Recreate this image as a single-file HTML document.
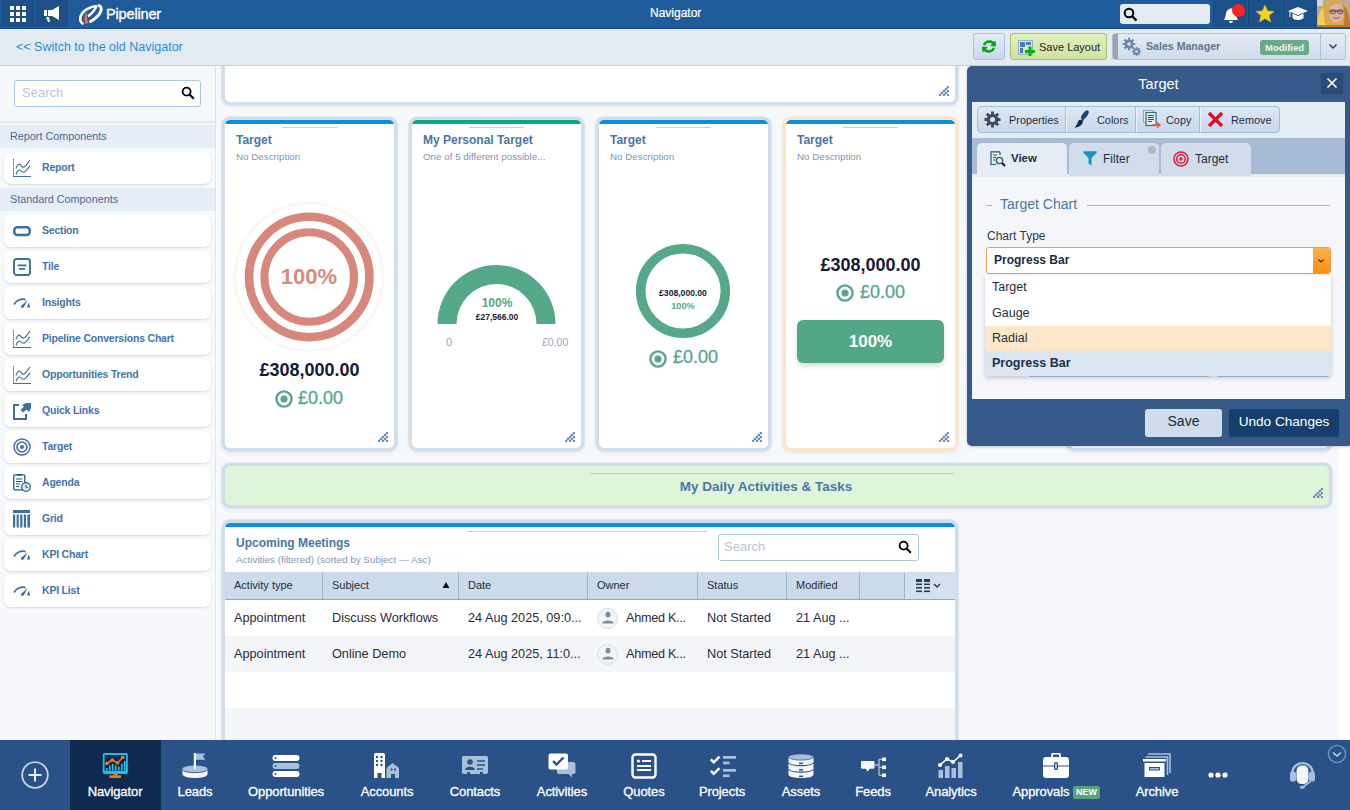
<!DOCTYPE html>
<html><head><meta charset="utf-8">
<style>
*{box-sizing:border-box;margin:0;padding:0}
html,body{width:1350px;height:810px;overflow:hidden}
body{font-family:"Liberation Sans",sans-serif;background:#f6f8fc;position:relative;color:#1b2a3a}
.abs{position:absolute}
svg{display:block}
/* top bar */
#top{z-index:30;position:absolute;left:0;top:0;width:1350px;height:29px;background:#1f5b9b;border-bottom:1px solid #1a4a82}
#top .sq{position:absolute;top:0;height:27px;background:#1d4f88}
#sub{z-index:30;position:absolute;left:0;top:29px;width:1350px;height:37px;background:#e4eaf2;border-bottom:1px solid #c4cfdc}
#side{position:absolute;left:0;top:66px;width:216px;height:674px;background:#f6f8fc;border-right:1px solid #dfe5ee}
#main{position:absolute;left:217px;top:66px;width:1121px;height:674px;background:#f6f8fc}
#rstrip{position:absolute;left:1338px;top:66px;width:12px;height:674px;background:#fff}
#bottom{z-index:30;position:absolute;left:0;top:740px;width:1350px;height:70px;background:#2a5289}
</style></head><body>
<!-- TOP BAR -->
<div id="top">
  <div class="sq" style="left:1px;width:33px;border-right:1px solid #1b4677"></div>
  <div class="sq" style="left:35px;width:33px"></div>
  <svg class="abs" style="left:10px;top:6px" width="16" height="16" viewBox="0 0 16 16" fill="#fff"><rect x="0" y="0" width="4" height="4"/><rect x="6" y="0" width="4" height="4"/><rect x="12" y="0" width="4" height="4"/><rect x="0" y="6" width="4" height="4"/><rect x="6" y="6" width="4" height="4"/><rect x="12" y="6" width="4" height="4"/><rect x="0" y="12" width="4" height="4"/><rect x="6" y="12" width="4" height="4"/><rect x="12" y="12" width="4" height="4"/></svg>
  <svg class="abs" style="left:43px;top:5px" width="18" height="18" viewBox="0 0 18 18" fill="#fff"><rect x="1" y="5" width="3" height="6"/><path d="M5 5 L9 5 L16 1 L16 15 L9 11 L5 11 Z"/><path d="M3 12 L6 12 L7 17 L5 17 Z"/></svg>
  <svg class="abs" style="left:76px;top:2px" width="30" height="25" viewBox="0 0 30 25"><g fill="none" stroke="#fff" stroke-linecap="round"><path d="M6.5 21.5 C2 18 4.5 10.5 11.5 6.8 C14.5 5.2 17.5 4.3 20 4.3" stroke-width="2.6"/><path d="M12.8 13.8 C15.5 11.5 19 8 20.3 4.6" stroke-width="2.5"/><path d="M23 3.6 C27.5 5.5 25.5 13 14.5 19.5" stroke-width="3"/></g><path d="M10.3 9.3 C8.3 13 8 18 9.3 22 L12.3 21.2 C11 17.5 10.6 13.5 10.3 9.3 Z" fill="#f26a3f"/></svg>
  <div class="abs" style="left:106px;top:6px;font-size:14.6px;color:#fff;letter-spacing:-0.2px;-webkit-text-stroke:0.35px #fff">Pipeliner</div>
  <div class="abs" style="left:650px;top:6px;font-size:12px;color:#fff;-webkit-text-stroke:0.2px #fff">Navigator</div>
  <div class="abs" style="left:1120px;top:4px;width:90px;height:20px;background:#e4eaf2;border-radius:3px"></div>
  <svg class="abs" style="left:1123px;top:7px" width="15" height="15" viewBox="0 0 15 15"><circle cx="6" cy="6" r="4.3" fill="none" stroke="#000" stroke-width="2"/><path d="M9 9 L13.5 13.5" stroke="#000" stroke-width="2.4"/></svg>
  <div class="sq" style="left:1213px;width:34px;border-left:1px solid #1b4677"></div>
  <div class="sq" style="left:1248px;width:34px;border-left:1px solid #1b4677"></div>
  <div class="sq" style="left:1283px;width:34px;border-left:1px solid #1b4677"></div>
  <svg class="abs" style="left:1222px;top:5px" width="18" height="19" viewBox="0 0 18 19" fill="#fff"><path d="M2 15 C4 12 3.5 8 5 6 C6 4 8 3.5 9 3.5 C10 3.5 12 4 13 6 C14.5 8 14 12 16 15 Z"/><path d="M7 16 C7 18.5 11 18.5 11 16 Z"/></svg>
  <div class="abs" style="left:1232px;top:4px;width:13px;height:13px;border-radius:50%;background:#f52525"></div>
  <svg class="abs" style="left:1255px;top:4px" width="20" height="20" viewBox="0 0 20 20"><path d="M10 1 L12.6 7 L19 7.4 L14 11.6 L15.7 18 L10 14.5 L4.3 18 L6 11.6 L1 7.4 L7.4 7 Z" fill="#f5d21d" stroke="#e9b800" stroke-width="0.6"/></svg>
  <svg class="abs" style="left:1288px;top:6px" width="20" height="16" viewBox="0 0 20 16" fill="#fff"><path d="M10 1 L20 5 L10 9 L0 5 Z"/><path d="M4.5 7.5 L4.5 12 C6 14.5 14 14.5 15.5 12 L15.5 7.5 L10 10 Z"/><rect x="1.5" y="5" width="1" height="6"/></svg>
  <svg class="abs" style="left:1317px;top:0" width="33" height="27" viewBox="0 0 33 27"><defs><filter id="bl" x="-10%" y="-10%" width="120%" height="120%"><feGaussianBlur stdDeviation="0.7"/></filter></defs><rect width="33" height="27" fill="#b3aca0"/><g filter="url(#bl)"><rect x="0" y="0" width="6" height="6" fill="#d8d4cc"/><path d="M1 27 C-1 18 2 8 8 3 C13 -1 22 -1 27 3 C32 8 34 18 33 27 Z" fill="#dca84a"/><path d="M1 27 C0 20 2 12 6 7 C7 14 7 21 9 27 Z" fill="#f2cf5e"/><path d="M26 27 C28 20 28 11 26 5 C31 9 33 18 33 27 Z" fill="#b47a34"/><ellipse cx="19.5" cy="12.5" rx="7.2" ry="10.5" fill="#d9b3a9"/><path d="M12 4 C15 0.5 24 0.5 27 5 C23 3 16 3 12 7 Z" fill="#d9a84a"/><path d="M12.5 11 H26" stroke="#6e4a3e" stroke-width="1.3"/><rect x="13" y="10" width="5.5" height="3.4" rx="1" fill="none" stroke="#6e4a3e" stroke-width="0.9"/><rect x="20.5" y="10" width="5.5" height="3.4" rx="1" fill="none" stroke="#6e4a3e" stroke-width="0.9"/><path d="M16 17.5 C18 18.5 21 18.5 23 17.5" stroke="#9a5a52" stroke-width="1" fill="none"/><rect x="0" y="25" width="33" height="2" fill="#c8762e"/></g></svg>
</div>
<!-- SUB BAR -->
<div id="sub">
  <div class="abs" style="left:16px;top:11px;font-size:12.5px;color:#1c8fdc">&lt;&lt; Switch to the old Navigator</div>
  <div class="abs" style="left:973px;top:4px;width:32px;height:27px;border:1px solid #9fc3e5;border-radius:3px;background:linear-gradient(#e3ecf6,#c8d9ec)"></div>
  <svg class="abs" style="left:980px;top:9px" width="18" height="17" viewBox="0 0 18 17"><path d="M3 7 C4 2 11 1 14 4 L15.5 2.5 L16 8.5 L10 8 L12 6 C10 4 6 4.5 5.5 7.5 Z" fill="#0ea014"/><path d="M15 10 C14 15 7 16 4 13 L2.5 14.5 L2 8.5 L8 9 L6 11 C8 13 12 12.5 12.5 9.5 Z" fill="#0ea014"/></svg>
  <div class="abs" style="left:1010px;top:4px;width:97px;height:27px;border:1px solid #a9c06e;border-radius:3px;background:linear-gradient(#e2f0bd,#cfe3a0)"></div>
  <svg class="abs" style="left:1018px;top:11px" width="17" height="16" viewBox="0 0 17 16"><rect x="0.5" y="0.5" width="14" height="14" fill="none" stroke="#8fb0d0" stroke-width="1"/><rect x="2" y="2" width="5" height="5" fill="#4a7cb8"/><rect x="8" y="2" width="5" height="3" fill="#4a7cb8"/><rect x="2" y="8" width="3" height="5" fill="#4a7cb8"/><path d="M10.5 6.5 h3 v3.5 h3.5 v3 h-3.5 v3.5 h-3 v-3.5 h-3.5 v-3 h3.5 z" fill="#0ead14"/></svg>
  <div class="abs" style="left:1039px;top:12px;font-size:11px;color:#1c2630">Save Layout</div>
  <div class="abs" style="left:1112px;top:4px;width:234px;height:27px;border:1px solid #a9c2de;border-radius:3px;background:linear-gradient(#e3ebf5,#cfdcec);overflow:hidden">
    <div class="abs" style="left:-1px;top:-1px;width:6px;height:27px;background:#a0a4a8"></div>
    <div class="abs" style="left:207px;top:-1px;width:1px;height:27px;background:#a9c2de"></div>
  </div>
  <svg class="abs" style="left:1122px;top:8px" width="20" height="20" viewBox="0 0 20 20"><g fill="#6a86a6"><circle cx="7" cy="7" r="4.2"/><circle cx="14.5" cy="14.5" r="3.2"/></g><g stroke="#6a86a6" stroke-width="2.2"><path d="M7 0.8 V13.2 M0.8 7 H13.2 M2.6 2.6 L11.4 11.4 M11.4 2.6 L2.6 11.4"/></g><g stroke="#6a86a6" stroke-width="1.6"><path d="M14.5 10 V19 M10 14.5 H19 M11.3 11.3 L17.7 17.7 M17.7 11.3 L11.3 17.7"/></g><circle cx="7" cy="7" r="1.8" fill="#dbe5f1"/><circle cx="14.5" cy="14.5" r="1.3" fill="#dbe5f1"/></svg>
  <div class="abs" style="left:1146px;top:11px;font-size:10.6px;font-weight:700;color:#637689">Sales Manager</div>
  <div class="abs" style="left:1260px;top:11px;width:49px;height:15px;border-radius:3px;background:#6aaa86;color:#fff;font-size:9.5px;font-weight:700;text-align:center;line-height:15px;color:#eef5f0">Modified</div>
  <svg class="abs" style="left:1328px;top:14px" width="10" height="7" viewBox="0 0 10 7"><path d="M1.5 1.5 L5 5 L8.5 1.5" fill="none" stroke="#2a3f5a" stroke-width="1.5"/></svg>
</div>
<div id="side">
<div class="abs" style="left:0;top:0;width:215px;height:55px;background:#f6f8fc;box-shadow:0 2px 2px rgba(0,0,0,0.08)"></div>
<div class="abs" style="left:14px;top:14px;width:187px;height:27px;background:#fff;border:1px solid #a8c5e6;border-radius:3px"></div>
<div class="abs" style="left:22px;top:19px;font-size:13px;color:#b9c6d4">Search</div>
<svg class="abs" style="left:181px;top:20px" width="14" height="14" viewBox="0 0 14 14"><circle cx="5.6" cy="5.6" r="4" fill="none" stroke="#000" stroke-width="1.8"/><path d="M8.5 8.5 L12.8 12.8" stroke="#000" stroke-width="2.2"/></svg>
<div class="abs" style="left:0;top:59px;width:215px;height:23px;background:#e6edf8"></div>
<div class="abs" style="left:10px;top:64px;font-size:10.8px;color:#4a6a90">Report Components</div>
<div class="abs" style="left:4px;top:86px;width:207px;height:32px;background:#fff;border-radius:7px;box-shadow:0 1px 2px rgba(0,0,0,0.13)"></div>
<div class="abs" style="left:13px;top:93px;width:18px;height:18px"><svg width="18" height="18" viewBox="0 0 18 18"><path d="M0.5 0 V17.5" fill="none" stroke="#3f6ea5" stroke-width="1" stroke-dasharray="1.5 0.7"/><path d="M0 17.5 H18.5" stroke="#3f6ea5" stroke-width="1"/><path d="M3 9.5 C4 6 5.5 4.5 7 5.5 C8.5 6.5 9 9 11 8 C13 7 15 3.5 17 1" fill="none" stroke="#3f6ea5" stroke-width="1.1"/><path d="M3 15.5 C4 12 5.5 10.5 7 11.2 C8.5 12 9.5 14 11.5 13 C13.5 12 15 9 17 7" fill="none" stroke="#3f6ea5" stroke-width="1.1"/></svg></div>
<div class="abs" style="left:42px;top:95px;font-size:10.5px;font-weight:700;color:#4574aa;letter-spacing:-0.2px;white-space:nowrap">Report</div>
<div class="abs" style="left:0;top:122px;width:215px;height:23px;background:#e6edf8"></div>
<div class="abs" style="left:10px;top:127px;font-size:10.8px;color:#4a6a90">Standard Components</div>
<div class="abs" style="left:4px;top:149px;width:207px;height:32px;background:#fff;border-radius:7px;box-shadow:0 1px 2px rgba(0,0,0,0.13)"></div>
<div class="abs" style="left:13px;top:156px;width:18px;height:18px"><svg width="18" height="18" viewBox="0 0 18 18"><rect x="1.3" y="5.3" width="15.4" height="7.6" rx="3" fill="none" stroke="#3f6ea5" stroke-width="2.5"/></svg></div>
<div class="abs" style="left:42px;top:158px;font-size:10.5px;font-weight:700;color:#4574aa;letter-spacing:-0.2px;white-space:nowrap">Section</div>
<div class="abs" style="left:4px;top:185px;width:207px;height:32px;background:#fff;border-radius:7px;box-shadow:0 1px 2px rgba(0,0,0,0.13)"></div>
<div class="abs" style="left:13px;top:192px;width:18px;height:18px"><svg width="18" height="18" viewBox="0 0 18 18"><rect x="1" y="1" width="16" height="16" rx="2.5" fill="none" stroke="#3f6ea5" stroke-width="1.9"/><rect x="4.6" y="6.5" width="8.8" height="1.8" fill="#3f6ea5"/><rect x="6" y="10" width="6" height="1.8" fill="#3f6ea5"/></svg></div>
<div class="abs" style="left:42px;top:194px;font-size:10.5px;font-weight:700;color:#4574aa;letter-spacing:-0.2px;white-space:nowrap">Tile</div>
<div class="abs" style="left:4px;top:221px;width:207px;height:32px;background:#fff;border-radius:7px;box-shadow:0 1px 2px rgba(0,0,0,0.13)"></div>
<div class="abs" style="left:13px;top:228px;width:18px;height:18px"><svg width="18" height="18" viewBox="0 0 18 18"><path d="M1 10.5 C3 6.5 8 4 12.6 5.6" fill="none" stroke="#3f6ea5" stroke-width="1.7"/><path d="M8.2 11.8 L14.8 6 L10.8 13.2 Z" fill="#3f6ea5"/><circle cx="9.4" cy="12.6" r="1.4" fill="#3f6ea5"/><path d="M14 13.4 L17.2 13.4 L15.7 8.3 Z" fill="#3f6ea5"/></svg></div>
<div class="abs" style="left:42px;top:230px;font-size:10.5px;font-weight:700;color:#4574aa;letter-spacing:-0.2px;white-space:nowrap">Insights</div>
<div class="abs" style="left:4px;top:257px;width:207px;height:32px;background:#fff;border-radius:7px;box-shadow:0 1px 2px rgba(0,0,0,0.13)"></div>
<div class="abs" style="left:13px;top:264px;width:18px;height:18px"><svg width="18" height="18" viewBox="0 0 18 18"><path d="M0.5 0 V17.5" fill="none" stroke="#3f6ea5" stroke-width="1" stroke-dasharray="1.5 0.7"/><path d="M0 17.5 H18.5" stroke="#3f6ea5" stroke-width="1"/><path d="M3 9.5 C4 6 5.5 4.5 7 5.5 C8.5 6.5 9 9 11 8 C13 7 15 3.5 17 1" fill="none" stroke="#3f6ea5" stroke-width="1.1"/><path d="M3 15.5 C4 12 5.5 10.5 7 11.2 C8.5 12 9.5 14 11.5 13 C13.5 12 15 9 17 7" fill="none" stroke="#3f6ea5" stroke-width="1.1"/></svg></div>
<div class="abs" style="left:42px;top:266px;font-size:10.5px;font-weight:700;color:#4574aa;letter-spacing:-0.2px;white-space:nowrap">Pipeline Conversions Chart</div>
<div class="abs" style="left:4px;top:293px;width:207px;height:32px;background:#fff;border-radius:7px;box-shadow:0 1px 2px rgba(0,0,0,0.13)"></div>
<div class="abs" style="left:13px;top:300px;width:18px;height:18px"><svg width="18" height="18" viewBox="0 0 18 18"><path d="M0.5 0 V17.5" fill="none" stroke="#3f6ea5" stroke-width="1" stroke-dasharray="1.5 0.7"/><path d="M0 17.5 H18.5" stroke="#3f6ea5" stroke-width="1"/><path d="M3 9.5 C4 6 5.5 4.5 7 5.5 C8.5 6.5 9 9 11 8 C13 7 15 3.5 17 1" fill="none" stroke="#3f6ea5" stroke-width="1.1"/><path d="M3 15.5 C4 12 5.5 10.5 7 11.2 C8.5 12 9.5 14 11.5 13 C13.5 12 15 9 17 7" fill="none" stroke="#3f6ea5" stroke-width="1.1"/></svg></div>
<div class="abs" style="left:42px;top:302px;font-size:10.5px;font-weight:700;color:#4574aa;letter-spacing:-0.2px;white-space:nowrap">Opportunities Trend</div>
<div class="abs" style="left:4px;top:329px;width:207px;height:32px;background:#fff;border-radius:7px;box-shadow:0 1px 2px rgba(0,0,0,0.13)"></div>
<div class="abs" style="left:13px;top:336px;width:18px;height:18px"><svg width="18" height="18" viewBox="0 0 18 18"><path d="M6 3 H1 V17 H13 V12" fill="none" stroke="#3f6ea5" stroke-width="2"/><path d="M9 3 L13 1 H18 V6 L16 10 L13.5 7.5 L10 10.5 L7.5 8 L11 4.5 Z" fill="#3f6ea5"/></svg></div>
<div class="abs" style="left:42px;top:338px;font-size:10.5px;font-weight:700;color:#4574aa;letter-spacing:-0.2px;white-space:nowrap">Quick Links</div>
<div class="abs" style="left:4px;top:365px;width:207px;height:32px;background:#fff;border-radius:7px;box-shadow:0 1px 2px rgba(0,0,0,0.13)"></div>
<div class="abs" style="left:13px;top:372px;width:18px;height:18px"><svg width="18" height="18" viewBox="0 0 18 18"><circle cx="9" cy="9" r="8" fill="none" stroke="#3f6ea5" stroke-width="1.4"/><circle cx="9" cy="9" r="5" fill="none" stroke="#3f6ea5" stroke-width="1.6"/><circle cx="9" cy="9" r="2" fill="#3f6ea5"/></svg></div>
<div class="abs" style="left:42px;top:374px;font-size:10.5px;font-weight:700;color:#4574aa;letter-spacing:-0.2px;white-space:nowrap">Target</div>
<div class="abs" style="left:4px;top:401px;width:207px;height:32px;background:#fff;border-radius:7px;box-shadow:0 1px 2px rgba(0,0,0,0.13)"></div>
<div class="abs" style="left:13px;top:408px;width:18px;height:18px"><svg width="18" height="18" viewBox="0 0 18 18"><rect x="0.8" y="0.8" width="11" height="15" rx="1" fill="none" stroke="#1f5f7a" stroke-width="1.3"/><rect x="4" y="0" width="5" height="1.6" fill="#1f5f7a"/><path d="M3 5 H9.5 M3 7.5 H9.5 M3 10 H7 M3 12.5 H6" stroke="#1f5f7a" stroke-width="1"/><circle cx="13" cy="13" r="4.3" fill="#dfe8f2" stroke="#1f5f7a" stroke-width="1.2"/><path d="M13 10.5 V13.3 H15" fill="none" stroke="#1f5f7a" stroke-width="1"/></svg></div>
<div class="abs" style="left:42px;top:410px;font-size:10.5px;font-weight:700;color:#4574aa;letter-spacing:-0.2px;white-space:nowrap">Agenda</div>
<div class="abs" style="left:4px;top:437px;width:207px;height:32px;background:#fff;border-radius:7px;box-shadow:0 1px 2px rgba(0,0,0,0.13)"></div>
<div class="abs" style="left:13px;top:444px;width:18px;height:18px"><svg width="18" height="18" viewBox="0 0 18 18"><rect x="0" y="0" width="17" height="3" fill="#3f6ea5"/><g fill="#3f6ea5"><rect x="0" y="4.5" width="2.2" height="13"/><rect x="3.6" y="4.5" width="2.2" height="13"/><rect x="7.2" y="4.5" width="2.2" height="13"/><rect x="10.8" y="4.5" width="2.2" height="13"/><rect x="14.4" y="4.5" width="2.6" height="13"/></g></svg></div>
<div class="abs" style="left:42px;top:446px;font-size:10.5px;font-weight:700;color:#4574aa;letter-spacing:-0.2px;white-space:nowrap">Grid</div>
<div class="abs" style="left:4px;top:473px;width:207px;height:32px;background:#fff;border-radius:7px;box-shadow:0 1px 2px rgba(0,0,0,0.13)"></div>
<div class="abs" style="left:13px;top:480px;width:18px;height:18px"><svg width="18" height="18" viewBox="0 0 18 18"><path d="M1 10.5 C3 6.5 8 4 12.6 5.6" fill="none" stroke="#3f6ea5" stroke-width="1.7"/><path d="M8.2 11.8 L14.8 6 L10.8 13.2 Z" fill="#3f6ea5"/><circle cx="9.4" cy="12.6" r="1.4" fill="#3f6ea5"/><path d="M14 13.4 L17.2 13.4 L15.7 8.3 Z" fill="#3f6ea5"/></svg></div>
<div class="abs" style="left:42px;top:482px;font-size:10.5px;font-weight:700;color:#4574aa;letter-spacing:-0.2px;white-space:nowrap">KPI Chart</div>
<div class="abs" style="left:4px;top:509px;width:207px;height:32px;background:#fff;border-radius:7px;box-shadow:0 1px 2px rgba(0,0,0,0.13)"></div>
<div class="abs" style="left:13px;top:516px;width:18px;height:18px"><svg width="18" height="18" viewBox="0 0 18 18"><path d="M1 10.5 C3 6.5 8 4 12.6 5.6" fill="none" stroke="#3f6ea5" stroke-width="1.7"/><path d="M8.2 11.8 L14.8 6 L10.8 13.2 Z" fill="#3f6ea5"/><circle cx="9.4" cy="12.6" r="1.4" fill="#3f6ea5"/><path d="M14 13.4 L17.2 13.4 L15.7 8.3 Z" fill="#3f6ea5"/></svg></div>
<div class="abs" style="left:42px;top:518px;font-size:10.5px;font-weight:700;color:#4574aa;letter-spacing:-0.2px;white-space:nowrap">KPI List</div>
</div>
<div id="main"></div>
<!--MAIN-->
<div class="abs" style="left:222px;top:50px;width:736px;height:55px;border:3px solid #d1ddea;border-radius:8px;background:#fff;box-shadow:0 0 0 1px #d1ddea99,0 2px 4px rgba(40,60,90,0.07);overflow:hidden"></div>
<div class="abs" style="left:939px;top:86px;width:10px;height:10px"><svg width="10" height="10" viewBox="0 0 10 10" fill="#6f8db5"><path d="M0.5 9.5 L9.5 0.5 M4.5 9.5 L9.5 4.5 M8.5 9.5 L9.5 8.5" stroke="#b9c8dc" stroke-width="2.4"/><rect x="8" y="0" width="2" height="2"/><rect x="6" y="2" width="2" height="2"/><rect x="8" y="4" width="2" height="2"/><rect x="4" y="4" width="2" height="2"/><rect x="2" y="6" width="2" height="2"/><rect x="6" y="6" width="2" height="2"/><rect x="0" y="8" width="2" height="2"/><rect x="4" y="8" width="2" height="2"/><rect x="8" y="8" width="2" height="2"/></svg></div>
<div class="abs" style="left:222px;top:117px;width:175px;height:334px;border:3px solid #d1ddea;border-radius:8px;background:#fff;box-shadow:0 0 0 1px #d1ddea99,0 2px 4px rgba(40,60,90,0.07);overflow:hidden"><div class="abs" style="left:0;top:0;width:170px;height:4px;background:#0a8fe0"></div></div>
<div class="abs" style="left:282px;top:127px;width:55px;height:1px;background:#c3cfdd"></div>
<div class="abs" style="left:236px;top:133px;font-size:12px;font-weight:700;color:#4a76a8;white-space:nowrap">Target</div>
<div class="abs" style="left:236px;top:151px;font-size:9.8px;color:#7d98b8;white-space:nowrap">No Description</div>
<div class="abs" style="left:378px;top:432px;width:10px;height:10px"><svg width="10" height="10" viewBox="0 0 10 10" fill="#6f8db5"><path d="M0.5 9.5 L9.5 0.5 M4.5 9.5 L9.5 4.5 M8.5 9.5 L9.5 8.5" stroke="#b9c8dc" stroke-width="2.4"/><rect x="8" y="0" width="2" height="2"/><rect x="6" y="2" width="2" height="2"/><rect x="8" y="4" width="2" height="2"/><rect x="4" y="4" width="2" height="2"/><rect x="2" y="6" width="2" height="2"/><rect x="6" y="6" width="2" height="2"/><rect x="0" y="8" width="2" height="2"/><rect x="4" y="8" width="2" height="2"/><rect x="8" y="8" width="2" height="2"/></svg></div>
<div class="abs" style="left:409px;top:117px;width:175px;height:334px;border:3px solid #d1ddea;border-radius:8px;background:#fff;box-shadow:0 0 0 1px #d1ddea99,0 2px 4px rgba(40,60,90,0.07);overflow:hidden"><div class="abs" style="left:0;top:0;width:170px;height:4px;background:#0aa58a"></div></div>
<div class="abs" style="left:469px;top:127px;width:55px;height:1px;background:#c3cfdd"></div>
<div class="abs" style="left:423px;top:133px;font-size:12px;font-weight:700;color:#4a76a8;white-space:nowrap">My Personal Target</div>
<div class="abs" style="left:423px;top:151px;font-size:9.8px;color:#7d98b8;white-space:nowrap">One of 5 different possible...</div>
<div class="abs" style="left:565px;top:432px;width:10px;height:10px"><svg width="10" height="10" viewBox="0 0 10 10" fill="#6f8db5"><path d="M0.5 9.5 L9.5 0.5 M4.5 9.5 L9.5 4.5 M8.5 9.5 L9.5 8.5" stroke="#b9c8dc" stroke-width="2.4"/><rect x="8" y="0" width="2" height="2"/><rect x="6" y="2" width="2" height="2"/><rect x="8" y="4" width="2" height="2"/><rect x="4" y="4" width="2" height="2"/><rect x="2" y="6" width="2" height="2"/><rect x="6" y="6" width="2" height="2"/><rect x="0" y="8" width="2" height="2"/><rect x="4" y="8" width="2" height="2"/><rect x="8" y="8" width="2" height="2"/></svg></div>
<div class="abs" style="left:596px;top:117px;width:175px;height:334px;border:3px solid #d1ddea;border-radius:8px;background:#fff;box-shadow:0 0 0 1px #d1ddea99,0 2px 4px rgba(40,60,90,0.07);overflow:hidden"><div class="abs" style="left:0;top:0;width:170px;height:4px;background:#0a8fe0"></div></div>
<div class="abs" style="left:656px;top:127px;width:55px;height:1px;background:#c3cfdd"></div>
<div class="abs" style="left:610px;top:133px;font-size:12px;font-weight:700;color:#4a76a8;white-space:nowrap">Target</div>
<div class="abs" style="left:610px;top:151px;font-size:9.8px;color:#7d98b8;white-space:nowrap">No Description</div>
<div class="abs" style="left:752px;top:432px;width:10px;height:10px"><svg width="10" height="10" viewBox="0 0 10 10" fill="#6f8db5"><path d="M0.5 9.5 L9.5 0.5 M4.5 9.5 L9.5 4.5 M8.5 9.5 L9.5 8.5" stroke="#b9c8dc" stroke-width="2.4"/><rect x="8" y="0" width="2" height="2"/><rect x="6" y="2" width="2" height="2"/><rect x="8" y="4" width="2" height="2"/><rect x="4" y="4" width="2" height="2"/><rect x="2" y="6" width="2" height="2"/><rect x="6" y="6" width="2" height="2"/><rect x="0" y="8" width="2" height="2"/><rect x="4" y="8" width="2" height="2"/><rect x="8" y="8" width="2" height="2"/></svg></div>
<div class="abs" style="left:783px;top:117px;width:175px;height:334px;border:3px solid #fde5c8;border-radius:8px;background:#fff;box-shadow:0 0 0 1px #fde5c899,0 2px 4px rgba(40,60,90,0.07);overflow:hidden"><div class="abs" style="left:0;top:0;width:170px;height:4px;background:#0a8fe0"></div></div>
<div class="abs" style="left:843px;top:127px;width:55px;height:1px;background:#c3cfdd"></div>
<div class="abs" style="left:797px;top:133px;font-size:12px;font-weight:700;color:#4a76a8;white-space:nowrap">Target</div>
<div class="abs" style="left:797px;top:151px;font-size:9.8px;color:#7d98b8;white-space:nowrap">No Description</div>
<div class="abs" style="left:939px;top:432px;width:10px;height:10px"><svg width="10" height="10" viewBox="0 0 10 10" fill="#6f8db5"><path d="M0.5 9.5 L9.5 0.5 M4.5 9.5 L9.5 4.5 M8.5 9.5 L9.5 8.5" stroke="#b9c8dc" stroke-width="2.4"/><rect x="8" y="0" width="2" height="2"/><rect x="6" y="2" width="2" height="2"/><rect x="8" y="4" width="2" height="2"/><rect x="4" y="4" width="2" height="2"/><rect x="2" y="6" width="2" height="2"/><rect x="6" y="6" width="2" height="2"/><rect x="0" y="8" width="2" height="2"/><rect x="4" y="8" width="2" height="2"/><rect x="8" y="8" width="2" height="2"/></svg></div>
<div class="abs" style="left:236px;top:204px;width:146px;height:146px;border-radius:50%;background:#fff;box-shadow:0 0 4px rgba(0,0,0,0.10)"></div>
<svg class="abs" style="left:229px;top:197px" width="160" height="160" viewBox="0 0 160 160"><circle cx="80.2" cy="80" r="60.2" fill="none" stroke="#d8887a" stroke-width="8.6"/><circle cx="80.2" cy="80" r="44.8" fill="none" stroke="#d8887a" stroke-width="8"/></svg>
<div class="abs" style="left:229px;top:264px;width:160px;text-align:center;font-size:22px;font-weight:700;color:#d98b7e">100%</div>
<div class="abs" style="left:222px;top:360px;width:175px;text-align:center;font-size:18px;font-weight:700;color:#171a36">£308,000.00</div>
<div class="abs" style="left:275px;top:390px;width:18px;height:18px"><svg width="18" height="18" viewBox="0 0 18 18"><circle cx="9" cy="9" r="7.6" fill="none" stroke="#55a888" stroke-width="2.4"/><circle cx="9" cy="9" r="3.6" fill="#55a888"/></svg></div>
<div class="abs" style="left:298px;top:388px;font-size:18px;color:#55a888;-webkit-text-stroke:0.3px #55a888">£0.00</div>
<svg class="abs" style="left:436px;top:263px" width="122" height="62" viewBox="0 0 122 62"><path d="M1.5 61 A59 59 0 0 1 119.5 61 L100.5 61 A40 40 0 0 0 20.5 61 Z" fill="#55a888"/></svg>
<div class="abs" style="left:436px;top:296px;width:122px;text-align:center;font-size:12px;font-weight:700;color:#55a888">100%</div>
<div class="abs" style="left:436px;top:312px;width:122px;text-align:center;font-size:8.5px;font-weight:700;color:#171a36">£27,566.00</div>
<div class="abs" style="left:446px;top:336px;font-size:11px;color:#9aa6b4">0</div>
<div class="abs" style="left:542px;top:336px;font-size:10.5px;color:#9aa6b4">£0.00</div>
<svg class="abs" style="left:633px;top:241px" width="100" height="100" viewBox="0 0 100 100"><circle cx="50" cy="50" r="42.3" fill="none" stroke="#55a888" stroke-width="9.5"/></svg>
<div class="abs" style="left:633px;top:288px;width:100px;text-align:center;font-size:8.6px;font-weight:700;color:#171a36">£308,000.00</div>
<div class="abs" style="left:633px;top:301px;width:100px;text-align:center;font-size:9.2px;font-weight:700;color:#55a888">100%</div>
<div class="abs" style="left:649px;top:350px;width:18px;height:18px"><svg width="18" height="18" viewBox="0 0 18 18"><circle cx="9" cy="9" r="7.6" fill="none" stroke="#55a888" stroke-width="2.4"/><circle cx="9" cy="9" r="3.6" fill="#55a888"/></svg></div>
<div class="abs" style="left:673px;top:347px;font-size:18px;color:#55a888;-webkit-text-stroke:0.3px #55a888">£0.00</div>
<div class="abs" style="left:783px;top:255px;width:175px;text-align:center;font-size:18px;font-weight:700;color:#171a36">£308,000.00</div>
<div class="abs" style="left:836px;top:284px;width:18px;height:18px"><svg width="18" height="18" viewBox="0 0 18 18"><circle cx="9" cy="9" r="7.6" fill="none" stroke="#55a888" stroke-width="2.4"/><circle cx="9" cy="9" r="3.6" fill="#55a888"/></svg></div>
<div class="abs" style="left:860px;top:282px;font-size:18px;color:#55a888;-webkit-text-stroke:0.3px #55a888">£0.00</div>
<div class="abs" style="left:797px;top:320px;width:147px;height:43px;border-radius:6px;background:#52a886;box-shadow:0 3px 5px rgba(0,0,0,0.15);color:#fff;font-size:17px;font-weight:700;text-align:center;line-height:43px">100%</div>
<div class="abs" style="left:1066px;top:400px;width:266px;height:51px;border:3px solid #d1ddea;border-radius:8px;background:#fff;box-shadow:0 0 0 1px #d1ddea99,0 2px 4px rgba(40,60,90,0.07);overflow:hidden"></div>
<div class="abs" style="left:222px;top:463px;width:1110px;height:45px;border:3px solid #d1ddea;border-radius:8px;background:#dff5d9;box-shadow:0 0 0 1px #d1ddea99,0 2px 4px rgba(40,60,90,0.07);overflow:hidden"></div>
<div class="abs" style="left:590px;top:473px;width:364px;height:1px;background:#b9cad9"></div>
<div class="abs" style="left:222px;top:479px;width:1088px;text-align:center;font-size:13.5px;font-weight:700;color:#4a76a8">My Daily Activities &amp; Tasks</div>
<div class="abs" style="left:1313px;top:488px;width:10px;height:10px"><svg width="10" height="10" viewBox="0 0 10 10" fill="#6f8db5"><path d="M0.5 9.5 L9.5 0.5 M4.5 9.5 L9.5 4.5 M8.5 9.5 L9.5 8.5" stroke="#b9c8dc" stroke-width="2.4"/><rect x="8" y="0" width="2" height="2"/><rect x="6" y="2" width="2" height="2"/><rect x="8" y="4" width="2" height="2"/><rect x="4" y="4" width="2" height="2"/><rect x="2" y="6" width="2" height="2"/><rect x="6" y="6" width="2" height="2"/><rect x="0" y="8" width="2" height="2"/><rect x="4" y="8" width="2" height="2"/><rect x="8" y="8" width="2" height="2"/></svg></div>
<div class="abs" style="left:222px;top:520px;width:736px;height:260px;border:3px solid #d1ddea;border-radius:8px;background:#fff;box-shadow:0 0 0 1px #d1ddea99,0 2px 4px rgba(40,60,90,0.07);overflow:hidden"><div class="abs" style="left:0;top:0;width:730px;height:4px;background:#0a8fe0"></div></div>
<div class="abs" style="left:467px;top:531px;width:240px;height:1px;background:#c3cfdd"></div>
<div class="abs" style="left:236px;top:536px;font-size:12px;font-weight:700;color:#4a76a8">Upcoming Meetings</div>
<div class="abs" style="left:236px;top:554px;font-size:9.9px;color:#7d98b8;white-space:nowrap">Activities (filtered) (sorted by Subject — Asc)</div>
<div class="abs" style="left:718px;top:534px;width:201px;height:27px;border:1px solid #a8c5e6;border-radius:3px;background:#fff"></div>
<div class="abs" style="left:724px;top:539px;font-size:13px;color:#b9c6d4">Search</div>
<svg class="abs" style="left:898px;top:540px" width="14" height="14" viewBox="0 0 14 14"><circle cx="5.6" cy="5.6" r="4" fill="none" stroke="#000" stroke-width="1.8"/><path d="M8.5 8.5 L12.8 12.8" stroke="#000" stroke-width="2.2"/></svg>
<div class="abs" style="left:225px;top:572px;width:730px;height:28px;background:#ccdbeb;border-bottom:1.5px solid #8eaacb"></div>
<div class="abs" style="left:322px;top:573px;width:1px;height:26px;background:#9fb6d1"></div>
<div class="abs" style="left:458px;top:573px;width:1px;height:26px;background:#9fb6d1"></div>
<div class="abs" style="left:587px;top:573px;width:1px;height:26px;background:#9fb6d1"></div>
<div class="abs" style="left:697px;top:573px;width:1px;height:26px;background:#9fb6d1"></div>
<div class="abs" style="left:786px;top:573px;width:1px;height:26px;background:#9fb6d1"></div>
<div class="abs" style="left:859px;top:573px;width:1px;height:26px;background:#9fb6d1"></div>
<div class="abs" style="left:904px;top:573px;width:1px;height:26px;background:#9fb6d1"></div>
<div class="abs" style="left:905px;top:572px;width:50px;height:27px;background:#d3e0ee"></div>
<div class="abs" style="left:234px;top:579px;font-size:11px;color:#1f2d3d">Activity type</div>
<div class="abs" style="left:332px;top:579px;font-size:11px;color:#1f2d3d">Subject</div>
<div class="abs" style="left:468px;top:579px;font-size:11px;color:#1f2d3d">Date</div>
<div class="abs" style="left:597px;top:579px;font-size:11px;color:#1f2d3d">Owner</div>
<div class="abs" style="left:707px;top:579px;font-size:11px;color:#1f2d3d">Status</div>
<div class="abs" style="left:796px;top:579px;font-size:11px;color:#1f2d3d">Modified</div>
<svg class="abs" style="left:442px;top:581px" width="8" height="8" viewBox="0 0 8 8"><path d="M4 1 L7.5 7 L0.5 7 Z" fill="#111"/></svg>
<svg class="abs" style="left:916px;top:579px" width="28" height="14" viewBox="0 0 28 14" fill="#2a3a5a"><rect x="0" y="0" width="6" height="3"/><rect x="8" y="0" width="6" height="3"/><rect x="0" y="4.5" width="6" height="1.6"/><rect x="8" y="4.5" width="6" height="1.6"/><rect x="0" y="8" width="6" height="1.6"/><rect x="8" y="8" width="6" height="1.6"/><rect x="0" y="11.5" width="6" height="1.6"/><rect x="8" y="11.5" width="6" height="1.6"/><path d="M18 5 L21 8 L24 5" fill="none" stroke="#2a3a5a" stroke-width="1.5"/></svg>
<div class="abs" style="left:225px;top:600px;width:730px;height:36px;background:#fff"></div>
<div class="abs" style="left:234px;top:611px;font-size:12.7px;color:#1f2d3d;white-space:nowrap;letter-spacing:0">Appointment</div>
<div class="abs" style="left:332px;top:611px;font-size:12.7px;color:#1f2d3d;white-space:nowrap;letter-spacing:0">Discuss Workflows</div>
<div class="abs" style="left:468px;top:611px;font-size:12.7px;color:#1f2d3d;white-space:nowrap;letter-spacing:0">24 Aug 2025, 09:0...</div>
<div class="abs" style="left:626px;top:611px;font-size:12.7px;color:#1f2d3d;white-space:nowrap;letter-spacing:-0.3px">Ahmed K...</div>
<div class="abs" style="left:707px;top:611px;font-size:12.7px;color:#1f2d3d;white-space:nowrap;letter-spacing:0">Not Started</div>
<div class="abs" style="left:796px;top:611px;font-size:12.7px;color:#1f2d3d;white-space:nowrap;letter-spacing:0">21 Aug ...</div>
<div class="abs" style="left:597px;top:608px;width:21px;height:21px;border-radius:50%;background:#f1f3f5;border:1px solid #dadfe5"></div>
<svg class="abs" style="left:601.5px;top:611px" width="12" height="13" viewBox="0 0 12 13" fill="#7f8e9c"><ellipse cx="6" cy="3.6" rx="2.5" ry="2.9"/><path d="M0.5 12.4 C0.5 8.6 11.5 8.6 11.5 12.4 Z"/></svg>
<div class="abs" style="left:225px;top:636px;width:730px;height:36px;background:#f3f5f8"></div>
<div class="abs" style="left:234px;top:647px;font-size:12.7px;color:#1f2d3d;white-space:nowrap;letter-spacing:0">Appointment</div>
<div class="abs" style="left:332px;top:647px;font-size:12.7px;color:#1f2d3d;white-space:nowrap;letter-spacing:0">Online Demo</div>
<div class="abs" style="left:468px;top:647px;font-size:12.7px;color:#1f2d3d;white-space:nowrap;letter-spacing:0">24 Aug 2025, 11:0...</div>
<div class="abs" style="left:626px;top:647px;font-size:12.7px;color:#1f2d3d;white-space:nowrap;letter-spacing:-0.3px">Ahmed K...</div>
<div class="abs" style="left:707px;top:647px;font-size:12.7px;color:#1f2d3d;white-space:nowrap;letter-spacing:0">Not Started</div>
<div class="abs" style="left:796px;top:647px;font-size:12.7px;color:#1f2d3d;white-space:nowrap;letter-spacing:0">21 Aug ...</div>
<div class="abs" style="left:597px;top:644px;width:21px;height:21px;border-radius:50%;background:#f1f3f5;border:1px solid #dadfe5"></div>
<svg class="abs" style="left:601.5px;top:647px" width="12" height="13" viewBox="0 0 12 13" fill="#7f8e9c"><ellipse cx="6" cy="3.6" rx="2.5" ry="2.9"/><path d="M0.5 12.4 C0.5 8.6 11.5 8.6 11.5 12.4 Z"/></svg>
<div class="abs" style="left:225px;top:672px;width:730px;height:36px;background:#fff"></div>
<div class="abs" style="left:225px;top:708px;width:730px;height:32px;background:#f3f5f8"></div>
<!--/MAIN-->
<div id="rstrip"></div>
<div id="panel" class="abs" style="left:967px;top:66px;width:386px;height:380px;background:#365a8a;border-radius:5px;z-index:20;box-shadow:0 1px 3px rgba(0,0,0,0.2)">
<div class="abs" style="left:0;top:10px;width:383px;text-align:center;font-size:14.5px;color:#fff">Target</div>
<div class="abs" style="left:354px;top:7px;width:22px;height:21px;background:#2b4c78;border:1px solid #2a4670;border-radius:2px"></div>
<svg class="abs" style="left:359px;top:11px" width="12" height="12" viewBox="0 0 12 12"><path d="M1.5 1.5 L10.5 10.5 M10.5 1.5 L1.5 10.5" stroke="#fff" stroke-width="1.7"/></svg>
<div class="abs" style="left:5px;top:36px;width:373px;height:297px;background:#f4f6fa"></div>
<div class="abs" style="left:5px;top:36px;width:373px;height:36px;background:#e6ecf4"></div>
<div class="abs" style="left:10px;top:40px;width:303px;height:27px;border:1px solid #9dbfe0;border-radius:4px;background:linear-gradient(#dde7f3,#c8d8eb)"></div>
<div class="abs" style="left:98px;top:41px;width:1px;height:25px;background:#9dbfe0"></div>
<div class="abs" style="left:99px;top:41px;width:1px;height:25px;background:#eef3f9"></div>
<div class="abs" style="left:168px;top:41px;width:1px;height:25px;background:#9dbfe0"></div>
<div class="abs" style="left:169px;top:41px;width:1px;height:25px;background:#eef3f9"></div>
<div class="abs" style="left:232px;top:41px;width:1px;height:25px;background:#9dbfe0"></div>
<div class="abs" style="left:233px;top:41px;width:1px;height:25px;background:#eef3f9"></div>
<div class="abs" style="left:42px;top:48px;font-size:10.9px;color:#1f2d44">Properties</div>
<div class="abs" style="left:130px;top:48px;font-size:10.9px;color:#1f2d44">Colors</div>
<div class="abs" style="left:199px;top:48px;font-size:10.9px;color:#1f2d44">Copy</div>
<div class="abs" style="left:264px;top:48px;font-size:10.9px;color:#1f2d44">Remove</div>
<svg class="abs" style="left:17px;top:45px" width="17" height="17" viewBox="0 0 17 17"><g fill="#3b4c5e"><circle cx="8.5" cy="8.5" r="5.8"/><g stroke="#3b4c5e" stroke-width="2.8"><path d="M8.5 0.5 V16.5 M0.5 8.5 H16.5 M2.8 2.8 L14.2 14.2 M14.2 2.8 L2.8 14.2"/></g></g><circle cx="8.5" cy="8.5" r="2.6" fill="#d3e0ee"/></svg>
<svg class="abs" style="left:107px;top:44px" width="18" height="18" viewBox="0 0 18 18"><ellipse cx="10.9" cy="4.9" rx="5.3" ry="2.4" transform="rotate(-52 10.9 4.9)" fill="#1a4577"/><path d="M7.9 9.2 L9.3 10.6" stroke="#1a4577" stroke-width="2.2"/><path d="M6.2 9.8 C8.2 9.8 9.3 11.2 8.6 13 C7.6 15.5 4 17.5 0.5 17.6 C2.5 16 3.2 13.5 4 11.8 C4.6 10.5 5.3 9.8 6.2 9.8 Z" fill="#102a4a"/></svg>
<svg class="abs" style="left:176px;top:44px" width="19" height="19" viewBox="0 0 19 19"><rect x="0.5" y="0.5" width="10" height="12" fill="#e8eef5" stroke="#8aa4bc" stroke-width="1"/><rect x="3" y="2.5" width="10" height="13" fill="#e8eef5" stroke="#2f6f7f" stroke-width="1.2"/><path d="M5 5.5 H11 M5 7.5 H11 M5 9.5 H11 M5 11.5 H9" stroke="#2f4f6f" stroke-width="1"/><path d="M9 15 H16.5 M14 12.5 L16.8 15 L14 17.5" fill="none" stroke="#ee5522" stroke-width="1.6"/></svg>
<svg class="abs" style="left:240px;top:45px" width="17" height="17" viewBox="0 0 17 17"><path d="M2 2 L15 15 M15 2 L2 15" stroke="#d4122a" stroke-width="3.2"/></svg>
<div class="abs" style="left:5px;top:72px;width:373px;height:37px;background:#a7bcd4"></div>
<div class="abs" style="left:5px;top:108px;width:373px;height:3px;background:#e6ecf4"></div>
<div class="abs" style="left:10px;top:77px;width:90px;height:33px;background:#e6ecf4;border-radius:5px 5px 0 0"></div>
<div class="abs" style="left:102px;top:77px;width:90px;height:33px;background:#d1ddea;border-radius:5px 5px 0 0"></div>
<div class="abs" style="left:194px;top:77px;width:90px;height:33px;background:#d1ddea;border-radius:5px 5px 0 0"></div>
<div class="abs" style="left:44px;top:86px;font-size:11.4px;font-weight:700;color:#1f2d44">View</div>
<div class="abs" style="left:136px;top:86px;font-size:12px;color:#1f2d44">Filter</div>
<div class="abs" style="left:228px;top:86px;font-size:12px;color:#1f2d44">Target</div>
<div class="abs" style="left:181px;top:80px;width:8px;height:8px;border-radius:50%;background:#b3b8bf"></div>
<svg class="abs" style="left:23px;top:85px" width="16" height="16" viewBox="0 0 16 16"><path d="M10 0.8 H1 V13.5 H6" fill="none" stroke="#1f5f6f" stroke-width="1.2"/><path d="M10 0.8 V4" stroke="#1f5f6f" stroke-width="1.2"/><path d="M3 4 H7 M3 6.5 H6 M3 9 H5" stroke="#1f5f6f" stroke-width="1"/><circle cx="9.5" cy="9.5" r="3.2" fill="#e6ecf4" stroke="#1f5f6f" stroke-width="1.3"/><path d="M11.8 11.8 L15 15" stroke="#111" stroke-width="1.8"/></svg>
<svg class="abs" style="left:116px;top:85px" width="14" height="15" viewBox="0 0 14 15"><path d="M0.5 0.5 H13.5 V2 L8.5 7 V14.5 L5.5 12.5 V7 L0.5 2 Z" fill="#1a91c9"/><rect x="0.5" y="0.5" width="13" height="1.2" fill="#1a91c9"/></svg>
<svg class="abs" style="left:206px;top:85px" width="16" height="16" viewBox="0 0 16 16"><circle cx="8" cy="8" r="7" fill="none" stroke="#e3203a" stroke-width="1.6"/><circle cx="8" cy="8" r="4.3" fill="none" stroke="#e3203a" stroke-width="1.6"/><circle cx="8" cy="8" r="1.8" fill="#e3203a"/></svg>
<div class="abs" style="left:19px;top:139px;width:6px;height:1px;background:#9eb6cf"></div>
<div class="abs" style="left:33px;top:130px;font-size:14px;color:#4a76a8">Target Chart</div>
<div class="abs" style="left:120px;top:139px;width:243px;height:1px;background:#9eb6cf"></div>
<div class="abs" style="left:20px;top:163px;font-size:12px;color:#2a3a50">Chart Type</div>
<div class="abs" style="left:61px;top:300px;width:182px;height:11px;border:1px solid #a8c5e6;border-top:none;border-radius:0 0 3px 3px;background:#fff"></div>
<div class="abs" style="left:249px;top:300px;width:114px;height:11px;border:1px solid #a8c5e6;border-top:none;border-radius:0 0 3px 3px;background:#fff"></div>
<div class="abs" style="left:19px;top:181px;width:345px;height:27px;border:1px solid #e8a04a;border-radius:3px;background:#fff;overflow:hidden"><div class="abs" style="right:0;top:0;width:17px;height:25px;background:linear-gradient(#ffb04a,#ff8c10)"></div></div>
<svg class="abs" style="left:350px;top:192px" width="8" height="6" viewBox="0 0 8 6"><path d="M1.5 1.5 L4 4 L6.5 1.5" fill="none" stroke="#333" stroke-width="1.1"/></svg>
<div class="abs" style="left:27px;top:187px;font-size:12px;font-weight:700;color:#1c2d44">Progress Bar</div>
<div class="abs" style="left:18px;top:209px;width:346px;height:101px;background:#fff;box-shadow:0 2px 4px rgba(0,0,0,0.18);border-radius:0 0 3px 3px;overflow:hidden"><div class="abs" style="left:0;top:51px;width:346px;height:25px;background:#fee6cb"></div><div class="abs" style="left:0;top:76px;width:346px;height:25px;background:#dce5f2"></div><div class="abs" style="left:7px;top:5px;font-size:12.5px;color:#1f2d44">Target</div><div class="abs" style="left:7px;top:31px;font-size:12.5px;color:#1f2d44">Gauge</div><div class="abs" style="left:7px;top:56px;font-size:12.5px;color:#1f2d44">Radial</div><div class="abs" style="left:7px;top:81px;font-size:12.5px;font-weight:700;color:#1f2d44">Progress Bar</div></div>
<div class="abs" style="left:178px;top:343px;width:77px;height:28px;background:#cfdcec;border-radius:3px;text-align:center;line-height:25px;font-size:14px;color:#1c2636">Save</div>
<div class="abs" style="left:262px;top:343px;width:110px;height:28px;background:#173f6e;border-radius:3px;text-align:center;line-height:25px;font-size:13.6px;color:#fff">Undo Changes</div>
</div>
<div id="bottom">
<div class="abs" style="left:70px;top:0;width:91px;height:70px;background:#0f2a4f"></div>
<svg class="abs" style="left:21px;top:21px" width="28" height="28" viewBox="0 0 28 28"><circle cx="14" cy="14" r="12.8" fill="none" stroke="#c9d6e6" stroke-width="1.8"/><path d="M14 7.5 V20.5 M7.5 14 H20.5" stroke="#e6eef7" stroke-width="2"/></svg>
<div class="abs" style="left:55px;top:44px;width:120px;text-align:center;font-size:13px;color:#fff;letter-spacing:-0.1px;-webkit-text-stroke:0.3px #fff">Navigator</div>
<div class="abs" style="left:135px;top:44px;width:120px;text-align:center;font-size:13px;color:#fff;letter-spacing:-0.1px;-webkit-text-stroke:0.3px #fff">Leads</div>
<div class="abs" style="left:226px;top:44px;width:120px;text-align:center;font-size:13px;color:#fff;letter-spacing:-0.1px;-webkit-text-stroke:0.3px #fff">Opportunities</div>
<div class="abs" style="left:327px;top:44px;width:120px;text-align:center;font-size:13px;color:#fff;letter-spacing:-0.1px;-webkit-text-stroke:0.3px #fff">Accounts</div>
<div class="abs" style="left:415px;top:44px;width:120px;text-align:center;font-size:13px;color:#fff;letter-spacing:-0.1px;-webkit-text-stroke:0.3px #fff">Contacts</div>
<div class="abs" style="left:502px;top:44px;width:120px;text-align:center;font-size:13px;color:#fff;letter-spacing:-0.1px;-webkit-text-stroke:0.3px #fff">Activities</div>
<div class="abs" style="left:584px;top:44px;width:120px;text-align:center;font-size:13px;color:#fff;letter-spacing:-0.1px;-webkit-text-stroke:0.3px #fff">Quotes</div>
<div class="abs" style="left:662px;top:44px;width:120px;text-align:center;font-size:13px;color:#fff;letter-spacing:-0.1px;-webkit-text-stroke:0.3px #fff">Projects</div>
<div class="abs" style="left:741px;top:44px;width:120px;text-align:center;font-size:13px;color:#fff;letter-spacing:-0.1px;-webkit-text-stroke:0.3px #fff">Assets</div>
<div class="abs" style="left:813px;top:44px;width:120px;text-align:center;font-size:13px;color:#fff;letter-spacing:-0.1px;-webkit-text-stroke:0.3px #fff">Feeds</div>
<div class="abs" style="left:891px;top:44px;width:120px;text-align:center;font-size:13px;color:#fff;letter-spacing:-0.1px;-webkit-text-stroke:0.3px #fff">Analytics</div>
<div class="abs" style="left:981px;top:44px;width:120px;text-align:center;font-size:13px;color:#fff;letter-spacing:-0.1px;-webkit-text-stroke:0.3px #fff">Approvals</div>
<div class="abs" style="left:1097px;top:44px;width:120px;text-align:center;font-size:13px;color:#fff;letter-spacing:-0.1px;-webkit-text-stroke:0.3px #fff">Archive</div>
<div class="abs" style="left:1073px;top:46px;width:27px;height:12.5px;background:#55a47a;border-radius:2px;color:#fff;font-size:9px;font-weight:700;text-align:center;line-height:12.5px">NEW</div>
<div class="abs" style="left:102px;top:13px;width:26px;height:26px"><svg width="26" height="26" viewBox="0 0 26 26"><rect x="0.8" y="0" width="25" height="21" rx="1.8" fill="#1ec0ea"/><rect x="2.6" y="2" width="21.4" height="15.8" fill="#0f2a4f"/><g fill="#1ec0ea"><rect x="4" y="15" width="1.6" height="2.6"/><rect x="7" y="12.5" width="1.6" height="5.1"/><rect x="10" y="11" width="1.6" height="6.6"/><rect x="13" y="12.5" width="1.6" height="5.1"/><rect x="16" y="13.5" width="1.6" height="4.1"/><rect x="19" y="11" width="1.6" height="6.6"/><rect x="22" y="8" width="1.6" height="9.6"/></g><path d="M4.8 10.5 L10.3 7 L15.5 10 L20.8 4.3" fill="none" stroke="#f27a12" stroke-width="1.5"/><g fill="#f27a12"><circle cx="4.8" cy="10.5" r="1.8"/><circle cx="10.3" cy="7" r="1.8"/><circle cx="15.5" cy="10" r="1.8"/><circle cx="20.8" cy="4.3" r="1.8"/></g><rect x="11.5" y="21" width="4" height="1.5" fill="#f27a12"/><rect x="7.5" y="22.3" width="11.5" height="2.6" rx="0.6" fill="#f27a12"/></svg></div>
<div class="abs" style="left:182px;top:13px;width:26px;height:26px"><svg width="26" height="26" viewBox="0 0 26 26"><path d="M0.5 16 V21 C0.5 26.3 25.5 26.3 25.5 21 V16 Z" fill="#f4f6fb"/><ellipse cx="13" cy="16" rx="12.5" ry="3.4" fill="#a9c0dc"/><path d="M0.6 16.8 C2.5 20.6 23.5 20.6 25.4 16.8" fill="none" stroke="#2b5189" stroke-width="0.9"/><rect x="11.8" y="0" width="2.2" height="16" fill="#f4f6fb"/><path d="M14 0.5 H23.5 L20.8 3.6 L23.5 6.7 H14 Z" fill="#a9c0dc"/></svg></div>
<div class="abs" style="left:272px;top:13px;width:28px;height:26px"><svg width="28" height="26" viewBox="0 0 28 26"><rect x="0.5" y="2" width="27" height="6" rx="3" fill="#fff"/><rect x="0.5" y="10" width="27" height="6" rx="3" fill="#a9c0dc"/><rect x="0.5" y="18" width="27" height="6" rx="3" fill="#fff"/><circle cx="3.5" cy="5" r="1" fill="#2b5189"/><circle cx="3.5" cy="13" r="1" fill="#2b5189"/><circle cx="3.5" cy="21" r="1" fill="#2b5189"/></svg></div>
<div class="abs" style="left:373px;top:13px;width:28px;height:26px"><svg width="28" height="26" viewBox="0 0 28 26"><path d="M1 1.5 C1 0.5 2 0 3 0 H10 C11 0 12 0.5 12 1.5 V25 H8.5 V20 H4.5 V25 H1 Z" fill="#fff"/><g fill="#2b5189"><circle cx="4" cy="4" r="1.2"/><circle cx="8.5" cy="4" r="1.2"/><circle cx="4" cy="8" r="1.2"/><circle cx="8.5" cy="8" r="1.2"/><circle cx="4" cy="12" r="1.2"/><circle cx="8.5" cy="12" r="1.2"/></g><path d="M13.5 15 L19.5 10 L26 15 V25 H22 V21 H18 V25 H13.5 Z" fill="#a9c0dc"/><g fill="#2b5189"><rect x="17.5" y="15.5" width="2" height="2"/><rect x="21" y="15.5" width="2" height="2"/></g></svg></div>
<div class="abs" style="left:461px;top:13px;width:28px;height:26px"><svg width="28" height="26" viewBox="0 0 28 26"><path d="M1 4.5 C1 3.5 2 3 3 3 H25 C26 3 27 3.5 27 4.5 V19 C27 20 26 21 25 21 H22 V19 H19 V21 H9 V19 H6 V21 H3 C2 21 1 20 1 19 Z" fill="#a9c0dc"/><circle cx="9" cy="9" r="2.8" fill="#2b5189"/><path d="M4 17 C4 12.5 14 12.5 14 17 Z" fill="#2b5189"/><path d="M16 8 H24 M16 12 H24 M16 16 H22" stroke="#2b5189" stroke-width="1.6"/></svg></div>
<div class="abs" style="left:548px;top:13px;width:28px;height:26px"><svg width="28" height="26" viewBox="0 0 28 26"><path d="M9 9 H25 C26.5 9 27.5 10 27.5 11.5 V19 C27.5 20 27 21 25.5 21 H24 V24.5 L20.5 21 H11 C9.5 21 9 20 9 19 Z" fill="#a9c0dc"/><rect x="0.5" y="0.5" width="19.5" height="16" rx="2" fill="#fff"/><path d="M5 8 L8.5 11.5 L15.5 4.5" fill="none" stroke="#2b5189" stroke-width="2.4"/></svg></div>
<div class="abs" style="left:631px;top:13px;width:26px;height:26px"><svg width="26" height="26" viewBox="0 0 26 26"><rect x="1.5" y="1.5" width="23" height="23" rx="3" fill="none" stroke="#fff" stroke-width="2.4"/><circle cx="7.5" cy="8" r="1.6" fill="#fff"/><rect x="11" y="7" width="9" height="2" fill="#fff"/><rect x="6" y="12" width="14" height="2" fill="#fff"/><rect x="6" y="16" width="14" height="2" fill="#fff"/></svg></div>
<div class="abs" style="left:708px;top:13px;width:28px;height:26px"><svg width="28" height="26" viewBox="0 0 28 26"><path d="M2.8 6.3 L5.8 9.3 L11.5 3.6" fill="none" stroke="#fff" stroke-width="2.5"/><path d="M2.8 17.8 L5.8 20.8 L11.5 15.1" fill="none" stroke="#fff" stroke-width="2.5"/><g fill="#a9c0dc"><rect x="15" y="3" width="13" height="2.7"/><rect x="15" y="8.6" width="6.5" height="2.7"/><rect x="15" y="16" width="13" height="2.7"/><rect x="15" y="21.4" width="6.5" height="2.7"/></g></svg></div>
<div class="abs" style="left:787px;top:13px;width:28px;height:26px"><svg width="28" height="26" viewBox="0 0 28 26"><path d="M1.5 4 V21.5 C1.5 26.3 26.5 26.3 26.5 21.5 V4 Z" fill="#f4f6fb"/><path d="M1.5 9.8 C4 13.6 24 13.6 26.5 9.8 M1.5 16.3 C4 20.1 24 20.1 26.5 16.3" fill="none" stroke="#2b5189" stroke-width="1.1"/><ellipse cx="14" cy="4" rx="12.5" ry="3.1" fill="#a9c0dc" stroke="#2b5189" stroke-width="0.7"/><g fill="#2b5189"><rect x="12" y="9.6" width="4" height="1.5"/><rect x="12" y="16.1" width="4" height="1.5"/><rect x="12" y="22.6" width="4" height="1.5"/></g></svg></div>
<div class="abs" style="left:859px;top:13px;width:28px;height:26px"><svg width="28" height="26" viewBox="0 0 28 26"><path d="M2 9.2 C2 8.4 2.5 8 3.3 8 H14.2 C15 8 15.5 8.4 15.5 9.2 V14.5 C15.5 15.3 15 15.7 14.2 15.7 H10.8 L8.7 18.5 L6.6 15.7 H3.3 C2.5 15.7 2 15.3 2 14.5 Z" fill="#f4f6fb"/><path d="M20 6.3 V22.3 M15.5 12 H20 M20 6.3 H23.5 M20 14.3 H23.5 M20 22.3 H23.5" fill="none" stroke="#a9c0dc" stroke-width="1.3"/><g fill="#f4f6fb"><rect x="23" y="4.5" width="4" height="3.6"/><rect x="23" y="12.5" width="4" height="3.6"/><rect x="23" y="20.5" width="4" height="3.6"/></g></svg></div>
<div class="abs" style="left:937px;top:13px;width:28px;height:26px"><svg width="28" height="26" viewBox="0 0 28 26"><g fill="#a9c0dc"><rect x="1.5" y="17" width="4.5" height="8"/><rect x="8" y="13" width="4.5" height="12"/><rect x="14.5" y="15" width="4.5" height="10"/><rect x="21" y="9" width="4.5" height="16"/></g><path d="M3 12 L10 6 L16 9 L23.5 2.5" fill="none" stroke="#fff" stroke-width="1.5"/><g fill="#fff"><circle cx="3" cy="12" r="2"/><circle cx="10" cy="6" r="2"/><circle cx="16" cy="9" r="2"/><circle cx="23.5" cy="2.5" r="2"/></g></svg></div>
<div class="abs" style="left:1042px;top:13px;width:28px;height:26px"><svg width="28" height="26" viewBox="0 0 28 26"><path d="M10 4 V2 C10 1 10.5 0.5 11.5 0.5 H16.5 C17.5 0.5 18 1 18 2 V4" fill="none" stroke="#fff" stroke-width="1.8"/><rect x="1" y="4" width="26" height="21" rx="3" fill="#fff"/><path d="M1 13 H27" stroke="#2b5189" stroke-width="1"/><rect x="12" y="9" width="4" height="8" rx="1.5" fill="#2b5189"/><rect x="13" y="10" width="2" height="6" rx="1" fill="#a9c0dc"/></svg></div>
<div class="abs" style="left:1143px;top:13px;width:28px;height:26px"><svg width="28" height="26" viewBox="0 0 28 26"><path d="M5 1 H27 V20" fill="none" stroke="#a9c0dc" stroke-width="1.6"/><path d="M2.5 4 H24.5 V22" fill="none" stroke="#a9c0dc" stroke-width="1.6"/><rect x="0" y="6" width="23" height="2.5" fill="#fff"/><rect x="1.5" y="10" width="20" height="14" fill="#fff"/><rect x="6" y="14" width="11" height="3.5" fill="#2b5189"/><rect x="7" y="15" width="9" height="1.5" fill="#a9c0dc"/></svg></div>
<svg class="abs" style="left:1208px;top:32px" width="20" height="6" viewBox="0 0 20 6" fill="#fff"><circle cx="3" cy="3" r="2.6"/><circle cx="10" cy="3" r="2.6"/><circle cx="17" cy="3" r="2.6"/></svg>
<svg class="abs" style="left:1289px;top:21px" width="28" height="29" viewBox="0 0 28 29"><path d="M3.2 13 C3.2 -1.5 23.8 -1.5 23.8 13" fill="none" stroke="#a9c0dc" stroke-width="2.4"/><rect x="1" y="10.5" width="6" height="10" rx="2.6" fill="#a9c0dc"/><rect x="20" y="10.5" width="6" height="10" rx="2.6" fill="#a9c0dc"/><path d="M7.5 11 C7.5 6 9.5 4.5 13.5 4.5 C17.5 4.5 19.5 6 19.5 11 V17 C19.5 21 17.5 23 13.5 23 C9.5 23 7.5 21 7.5 17 Z" fill="#f4f6fb"/><path d="M21.5 20.5 L14.5 25.5" stroke="#a9c0dc" stroke-width="1.6"/><ellipse cx="13.3" cy="26.2" rx="2.6" ry="1.5" fill="#a9c0dc"/></svg>
<svg class="abs" style="left:1327px;top:4px" width="20" height="20" viewBox="0 0 20 20"><circle cx="10" cy="10" r="8.6" fill="none" stroke="#6e93c3" stroke-width="1.4"/><path d="M6 8.5 L10 12 L14 8.5" fill="none" stroke="#c8d8ee" stroke-width="1.5"/></svg>
</div>
</body></html>
